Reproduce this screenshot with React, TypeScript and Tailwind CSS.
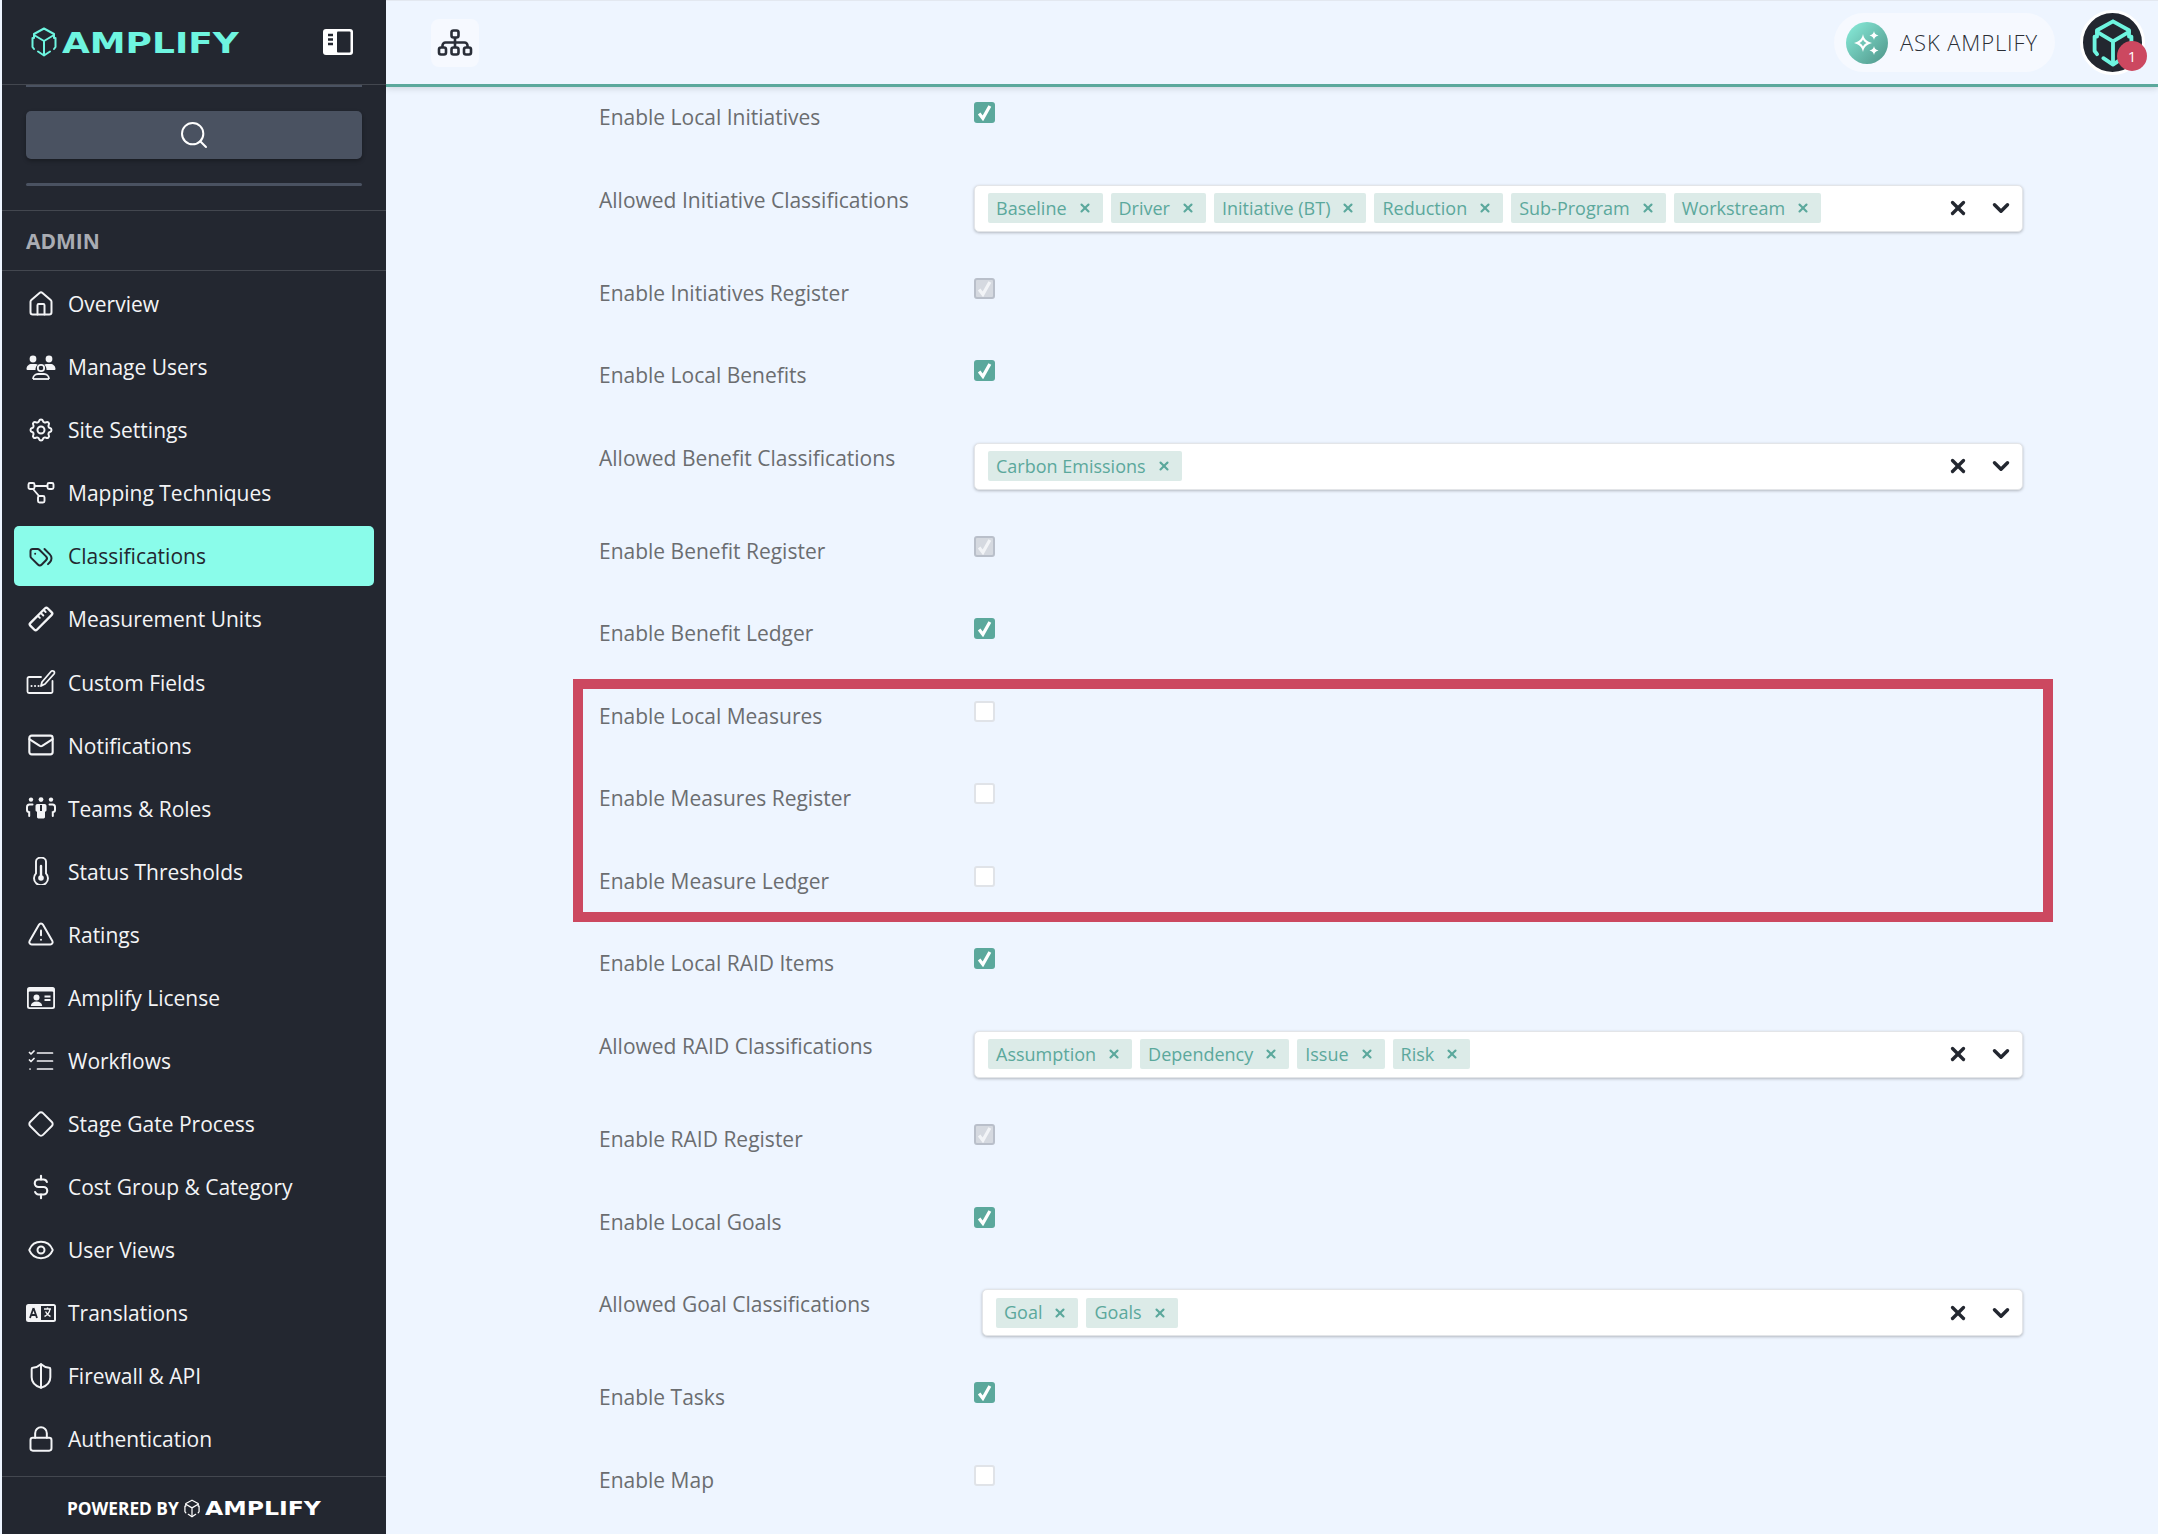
import { ChevronDown, Diamond, Eye, House, Lock, Mail, Search, ShieldHalf, TriangleAlert, X } from "lucide-react";
import { TbCurrencyDollar, TbSettings, TbTags } from "react-icons/tb";
import type { ReactNode } from "react";

const ico = { width: 28, height: 28, viewBox: "0 0 24 24", fill: "none", stroke: "currentColor", strokeWidth: 1.8, strokeLinecap: "round" as const, strokeLinejoin: "round" as const };

function CubeLogo({ className, weight = 2 }: { className?: string; weight?: number }) {
  return (
    <svg className={className} viewBox="0 0 26 30" fill="none" stroke="currentColor" strokeWidth={weight} strokeLinecap="round" strokeLinejoin="round">
      <path d="M13 1.500 3 7v4M13 1.500 23 7v4M1.500 11v9L3 22M24.500 11v9L23 22M7 24.500l6 4 6-4" />
      <path d="M3 8l10 6 10-6M13 14v13" />
    </svg>
  );
}

function UsersIcon() {
  return (
    <svg width="30" height="28" viewBox="0 0 30 28" fill="currentColor">
      <circle cx="7" cy="6" r="3.400" />
      <circle cx="23" cy="6" r="3.400" />
      <path d="M0.500 16c0-3 2.500-5 5-5h4c1 0 1.800.4 2.200.8-1.500 1.200-2.300 3-2.200 5.200H2c-1 0-1.500-.4-1.500-1zM29.500 16c0-3-2.500-5-5-5h-4c-1 0-1.800.4-2.200.8 1.500 1.200 2.300 3 2.200 5.200H28c1 0 1.500-.4 1.500-1z" />
      <circle cx="15" cy="15" r="3.200" fill="none" stroke="currentColor" strokeWidth="1.800" />
      <path d="M7 26c0-3.200 2.500-5 5-5h6c2.500 0 5 1.800 5 5" fill="none" stroke="currentColor" strokeWidth="1.800" />
      <path d="M7 26h16" stroke="currentColor" strokeWidth="1.800" />
    </svg>
  );
}

function MappingIcon() {
  return (
    <svg width="28" height="24" viewBox="0 0 28 24" fill="none" stroke="currentColor" strokeWidth="1.900" strokeLinejoin="round">
      <rect x="1.500" y="2" width="6" height="6" rx="1.500" />
      <rect x="20.500" y="2" width="6" height="6" rx="1.500" />
      <rect x="11" y="15" width="6.500" height="6.500" rx="1.500" />
      <path d="M7.500 5h13M6 8l6 7" />
    </svg>
  );
}

function RulerIcon() {
  return (
    <svg {...ico} strokeWidth="2">
      <rect x="1.500" y="8" width="21" height="8" rx="1.500" transform="rotate(-45 12 12)" />
      <path d="M9.500 9.500l1.500 1.500M12 7l2 2M14.500 4.500l1.500 1.500" strokeWidth="1.600" />
    </svg>
  );
}

function FieldsIcon() {
  return (
    <svg width="30" height="26" viewBox="0 0 30 26" fill="none" stroke="currentColor" strokeWidth="1.800" strokeLinecap="round" strokeLinejoin="round">
      <path d="M15 8H3a1.500 1.500 0 0 0-1.500 1.500v13A1.500 1.500 0 0 0 3 24h22a1.500 1.500 0 0 0 1.500-1.500V12" />
      <path d="M15 17l1-4L25 2.500a1.800 1.800 0 0 1 3 2.500L19 15z" />
      <path d="M5.500 17h.1M9 17h.1M12.500 17h.1" strokeWidth="2" />
    </svg>
  );
}

function TeamsIcon() {
  return (
    <svg width="30" height="22" viewBox="0 0 30 22" fill="currentColor">
      <circle cx="5" cy="2.600" r="2.200" />
      <circle cx="15" cy="2.600" r="2.400" />
      <circle cx="25" cy="2.600" r="2.200" />
      <path d="M11.500 7h7c1.200 0 2 .8 2 2v4c0 1-.7 1.600-1.500 1.800V20c0 .8-.6 1.400-1.400 1.400h-5.200c-.8 0-1.400-.6-1.400-1.400v-5.200c-.8-.2-1.500-.8-1.500-1.800V9c0-1.200.8-2 2-2z" />
      <path d="M15 8v6" stroke="#232730" strokeWidth="2" />
      <path d="M6.500 7.500H3.500C2 7.500 1 8.500 1 10v3c0 1 .8 2 2.200 2.200V19M23.500 7.500h3c1.500 0 2.500 1 2.500 2.500v3c0 1-.8 2-2.200 2.200V19" fill="none" stroke="currentColor" strokeWidth="2" strokeLinecap="round" />
    </svg>
  );
}

function ThermoIcon() {
  return (
    <svg width="18" height="28" viewBox="0 0 18 28" fill="none" stroke="currentColor" strokeWidth="1.900">
      <path d="M4 4.500a5 4 0 0 1 10 0v11.800a7 7 0 1 1-10 0z" />
      <path d="M9 9v11" strokeWidth="2.400" strokeLinecap="round" />
      <circle cx="9" cy="21" r="2.800" fill="currentColor" stroke="none" />
    </svg>
  );
}

function LicenseIcon() {
  return (
    <svg width="28" height="22" viewBox="0 0 28 22">
      <rect x="0" y="0" width="28" height="22" rx="2.500" fill="currentColor" />
      <rect x="1.800" y="4.500" width="24.400" height="15.700" rx="1" fill="#232730" />
      <circle cx="9.500" cy="10.500" r="3" fill="currentColor" />
      <path d="M3.800 19c.2-3 2.500-4.500 5.700-4.500s5.500 1.500 5.700 4.500z" fill="currentColor" />
      <path d="M17.500 9.500h6M17.500 13h6" stroke="currentColor" strokeWidth="1.800" />
    </svg>
  );
}

function ChecklistIcon() {
  return (
    <svg width="26" height="22" viewBox="0 0 26 22" fill="none" stroke="currentColor" strokeWidth="1.700" strokeLinecap="round" strokeLinejoin="round">
      <path d="M1.500 2.500 3 4l3-3M1.500 10 3 11.500l3-3M2 19h.1" />
      <path d="M9.500 3h15M9.500 11h15M9.500 19h15" />
    </svg>
  );
}

function TranslateIcon() {
  return (
    <svg width="30" height="18" viewBox="0 0 30 18">
      <rect x="0" y="0" width="30" height="18" rx="2.500" fill="currentColor" />
      <rect x="15" y="2" width="13" height="14" fill="#232730" />
      <path d="M7.500 4 4 14M7.500 4 11 14M5.200 11h4.600" stroke="#232730" strokeWidth="1.800" fill="none" />
      <path d="M18 5h7M21.500 3.500V5M24 5c-.5 3.500-2.500 6-5.500 7.500M19.500 7.500c1 2 2.500 4 5 5" stroke="currentColor" strokeWidth="1.400" fill="none" />
    </svg>
  );
}

function PanelIcon() {
  return (
    <svg width="30" height="26" viewBox="0 0 30 26">
      <rect x="0" y="0" width="30" height="26" rx="3" fill="#ffffff" />
      <rect x="14" y="2.500" width="13.500" height="21" rx="1" fill="#232730" />
      <path d="M5 6h5M5 10.500h5M5 15h5" stroke="#232730" strokeWidth="2.400" />
    </svg>
  );
}

function OrgIcon() {
  return (
    <svg width="36" height="28" viewBox="0 0 36 28" fill="none" stroke="#2a2e38" strokeWidth="2.600" strokeLinejoin="round">
      <rect x="14.500" y="1.500" width="7" height="7" rx="2" />
      <rect x="2" y="18.500" width="7" height="7" rx="2" />
      <rect x="14.500" y="18.500" width="7" height="7" rx="2" />
      <rect x="27" y="18.500" width="7" height="7" rx="2" />
      <path d="M18 8.500v10M5.500 18.500v-2a3 3 0 0 1 3-3h19a3 3 0 0 1 3 3v2" />
    </svg>
  );
}

function SparkIcon() {
  return (
    <svg width="28" height="28" viewBox="0 0 28 28" fill="#ffffff">
      <path fillRule="evenodd" d="M10 5c.8 4.500 3 7 9 9-6 2-8.200 4.500-9 9-.8-4.500-3-7-9-9 6-2 8.200-4.500 9-9zm0 5.500c-.7 1.500-1.700 2.500-3.500 3.500 1.800 1 2.800 2 3.500 3.500.7-1.500 1.700-2.500 3.500-3.500-1.800-1-2.800-2-3.500-3.500z" />
      <path d="M21 2c.4 2.200 1.300 3.400 4.500 4.500C22.300 7.600 21.400 8.800 21 11c-.4-2.200-1.300-3.400-4.500-4.500C19.700 5.400 20.600 4.200 21 2zM21 17c.4 2.200 1.300 3.400 4.500 4.500-3.200 1.100-4.100 2.300-4.500 4.500-.4-2.200-1.300-3.400-4.500-4.500 3.200-1.100 4.100-2.300 4.500-4.500z" />
    </svg>
  );
}

const NAV: { label: string; icon: ReactNode; active?: boolean }[] = [
  { label: "Overview", icon: <House width={28} height={28} strokeWidth={1.7} /> },
  { label: "Manage Users", icon: <UsersIcon /> },
  { label: "Site Settings", icon: <TbSettings size={28} strokeWidth={1.7} /> },
  { label: "Mapping Techniques", icon: <MappingIcon /> },
  { label: "Classifications", icon: <TbTags size={28} strokeWidth={1.7} />, active: true },
  { label: "Measurement Units", icon: <RulerIcon /> },
  { label: "Custom Fields", icon: <FieldsIcon /> },
  { label: "Notifications", icon: <Mail width={28} height={28} strokeWidth={1.8} /> },
  { label: "Teams & Roles", icon: <TeamsIcon /> },
  { label: "Status Thresholds", icon: <ThermoIcon /> },
  { label: "Ratings", icon: <TriangleAlert width={28} height={28} strokeWidth={1.7} /> },
  { label: "Amplify License", icon: <LicenseIcon /> },
  { label: "Workflows", icon: <ChecklistIcon /> },
  { label: "Stage Gate Process", icon: <Diamond width={28} height={28} strokeWidth={1.7} /> },
  { label: "Cost Group & Category", icon: <TbCurrencyDollar size={30} strokeWidth={1.7} /> },
  { label: "User Views", icon: <Eye width={28} height={28} strokeWidth={1.7} /> },
  { label: "Translations", icon: <TranslateIcon /> },
  { label: "Firewall & API", icon: <ShieldHalf width={28} height={28} strokeWidth={1.7} /> },
  { label: "Authentication", icon: <Lock width={28} height={28} strokeWidth={1.7} /> },
];

type Row =
  | { label: string; kind: "on" | "off" | "disabled" }
  | { label: string; kind: "select"; tags: string[]; indent?: boolean };

const ROWS: Row[] = [
  { label: "Enable Local Initiatives", kind: "on" },
  { label: "Allowed Initiative Classifications", kind: "select", tags: ["Baseline", "Driver", "Initiative (BT)", "Reduction", "Sub-Program", "Workstream"] },
  { label: "Enable Initiatives Register", kind: "disabled" },
  { label: "Enable Local Benefits", kind: "on" },
  { label: "Allowed Benefit Classifications", kind: "select", tags: ["Carbon Emissions"] },
  { label: "Enable Benefit Register", kind: "disabled" },
  { label: "Enable Benefit Ledger", kind: "on" },
  { label: "Enable Local Measures", kind: "off" },
  { label: "Enable Measures Register", kind: "off" },
  { label: "Enable Measure Ledger", kind: "off" },
  { label: "Enable Local RAID Items", kind: "on" },
  { label: "Allowed RAID Classifications", kind: "select", tags: ["Assumption", "Dependency", "Issue", "Risk"] },
  { label: "Enable RAID Register", kind: "disabled" },
  { label: "Enable Local Goals", kind: "on" },
  { label: "Allowed Goal Classifications", kind: "select", tags: ["Goal", "Goals"], indent: true },
  { label: "Enable Tasks", kind: "on" },
  { label: "Enable Map", kind: "off" },
];

function Checkbox({ kind }: { kind: "on" | "off" | "disabled" }) {
  if (kind === "off") {
    return <div className="h-[21px] w-[21px] rounded-[3px] border-[2.500px] border-[#e0e3e8] bg-white" />;
  }
  const box = kind === "on" ? "bg-[#5ba89c]" : "border-[2.500px] border-[#b9bfca] bg-[#d5d9e0]";
  const tick = kind === "on" ? "#ffffff" : "#f2f4f7";
  return (
    <div className={`flex h-[21px] w-[21px] items-center justify-center rounded-[3px] ${box}`}>
      <svg width="15" height="17" viewBox="0 0 14 15" fill="none" stroke={tick} strokeWidth="3">
        <path d="M2 8.500 5.500 13 12 1.500" />
      </svg>
    </div>
  );
}

function Select({ tags, indent }: { tags: string[]; indent?: boolean }) {
  return (
    <div className={`flex h-[47px] flex-1 items-center rounded-[5px] border border-[#e3e5e8] bg-white pr-[8px] pl-[13px] shadow-[0_1px_3px_rgba(0,0,0,0.25)] ${indent ? "ml-[8px]" : ""}`}>
      <div className="flex flex-1 items-center gap-[8px]">
        {tags.map((tag) => (
          <div key={tag} className="flex h-[30px] items-center gap-[11px] rounded-[2px] bg-[#dcebe8] pr-[11px] pl-[8px] text-[18px] text-[#5ba89c]">
            <span>{tag}</span>
            <X width={14} height={14} strokeWidth={3.600} />
          </div>
        ))}
      </div>
      <X width={22} height={22} strokeWidth={3.600} className="text-[#232730]" />
      <ChevronDown width={26} height={26} strokeWidth={3.200} className="ml-[19px] text-[#232730]" />
    </div>
  );
}

export default function App() {
  return (
    <div className="relative flex h-[1534px] w-[2158px] overflow-hidden bg-[#eef5ff] pl-[2px] font-['Open_Sans',sans-serif]">
      {/* Sidebar */}
      <aside className="flex w-[384px] shrink-0 flex-col bg-[#232730] text-[#f3f4f6]">
        <div className="flex h-[85px] items-center justify-between border-b border-[#43474f] pr-[33px] pl-[29px]">
          <div className="flex items-center gap-[5px] text-[#6ef5e0]">
            <CubeLogo className="h-[30px] w-[26px]" />
            <span className="mt-[2px] w-[177px] origin-left scale-x-[1.24] font-['DejaVu_Sans',sans-serif] text-[29px] leading-none font-bold">AMPLIFY</span>
          </div>
          <PanelIcon />
        </div>
        <div className="mx-6 h-[2px] bg-[#4a5261]" />
        <div className="mx-6 mt-[24px] flex h-[48px] items-center justify-center rounded-[5px] bg-[#4a5261] shadow-[0_2px_4px_rgba(0,0,0,0.3)]">
          <Search width={32} height={32} strokeWidth={1.500} className="text-white" />
        </div>
        <div className="mx-6 mt-[24px] h-[3px] rounded-sm bg-[#4a5261]" />
        <div className="mt-[24px] flex h-[61px] items-center border-y border-[#43474f] pt-[2px] pl-6 text-[21px] font-bold text-[#a9acb3]">ADMIN</div>
        <nav className="flex flex-col gap-[3.050px] pt-[3px]">
          {NAV.map((item) => (
            <div
              key={item.label}
              className={`mx-3 flex h-[60px] items-center gap-[11px] rounded-[5px] pl-[11px] text-[21px] ${item.active ? "bg-[#8afcea] text-[#232730]" : ""}`}
            >
              <span className="flex w-[32px] shrink-0 items-center justify-center">{item.icon}</span>
              <span className="pt-[2px]">{item.label}</span>
            </div>
          ))}
        </nav>
        <div className="mt-auto flex h-[58px] items-center gap-[5px] border-t border-[#43474f] pt-[6px] pl-[65px] text-white">
          <span className="text-[17.300px] font-bold">POWERED BY</span>
          <CubeLogo className="h-[19px] w-[16px]" />
          <span className="w-[115px] origin-left scale-x-[1.24] font-['DejaVu_Sans',sans-serif] text-[19px] leading-none font-bold">AMPLIFY</span>
        </div>
      </aside>

      {/* Main */}
      <main className="flex min-w-0 flex-1 flex-col">
        <header className="flex h-[87px] shrink-0 items-center border-t border-b-[3px] border-t-[#e3e8f0] border-b-[#5ba89c] pr-[13px] pl-[45px] shadow-[0_2px_6px_rgba(0,0,0,0.12)]">
          <div className="flex h-[48px] w-[48px] items-center justify-center rounded-[8px] bg-[#f6f9ff]">
            <OrgIcon />
          </div>
          <div className="ml-auto flex h-[59px] w-[221px] items-center gap-[12px] rounded-full bg-[#f6f9ff] pl-[12px]">
            <div className="flex h-[42px] w-[42px] items-center justify-center rounded-full bg-gradient-to-br from-[#8aefdd] to-[#4f9488]">
              <SparkIcon />
            </div>
            <span className="text-[22px] font-light tracking-[0.04em] text-[#2a2e36]">ASK AMPLIFY</span>
          </div>
          <div className="relative ml-[25px] flex h-[65px] w-[65px] items-center justify-center rounded-full border-[3px] border-white bg-[#232730] text-[#6ef5e0]">
            <CubeLogo className="h-[48px] w-[42px]" weight={2.400} />
            <span className="absolute right-[-5px] bottom-[1px] flex h-[30px] w-[30px] items-center justify-center rounded-full bg-[#cc4860] text-[15px] text-white">1</span>
          </div>
        </header>
        <div className="flex flex-col pt-[15px] pr-[135px] pl-[213px] text-[21px] text-[#6b6d70]">
          {ROWS.map((row) => (
            <div key={row.label} className={`flex items-start ${row.kind === "select" ? "h-[93.200px]" : "h-[82.500px]"}`}>
              <div className="w-[375px] shrink-0 text-[21px] leading-[30px]">{row.label}</div>
              {row.kind === "select" ? <Select tags={row.tags} indent={row.indent} /> : <Checkbox kind={row.kind} />}
            </div>
          ))}
        </div>
      </main>

      {/* Red annotation over the measures rows */}
      <div className="pointer-events-none absolute top-[679px] left-[573px] h-[243px] w-[1480px] border-[10px] border-[#cc4860]" />
    </div>
  );
}
